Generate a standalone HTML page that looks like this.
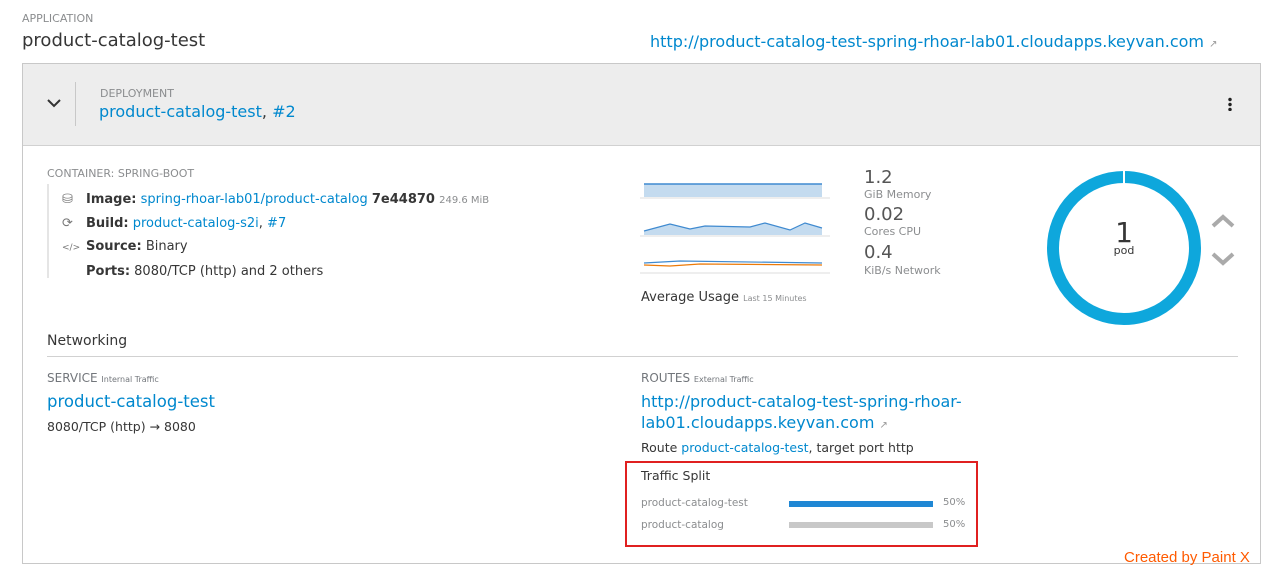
<!DOCTYPE html>
<html><head><style>
*{margin:0;padding:0;box-sizing:border-box}
body{width:1279px;height:572px;background:#fff;font-family:"DejaVu Sans","Liberation Sans",sans-serif;color:#363636;position:relative;overflow:hidden;font-size:13px}
.a{position:absolute;white-space:nowrap}
.lnk{color:#0088ce}
.sm{font-size:10px;color:#8b8d8f}
</style></head><body>
<div class="a sm" style="left:22px;top:12px;font-size:11px">APPLICATION</div>
<div class="a" style="left:22px;top:30px;font-size:18px;color:#363636">product-catalog-test</div>
<div class="a lnk" style="left:650px;top:32px;font-size:16px">http://product-catalog-test-spring-rhoar-lab01.cloudapps.keyvan.com <span style="font-size:10px;color:#999">↗</span></div>

<div class="a" style="left:22px;top:63px;width:1239px;height:501px;border:1px solid #c8c8c8"></div>
<div class="a" style="left:23px;top:64px;width:1237px;height:82px;background:#ededed;border-bottom:1px solid #d1d1d1"></div>
<svg class="a" style="left:46px;top:97px" width="16" height="12"><path d="M2 3 L8 9 L14 3" stroke="#333" stroke-width="2" fill="none"/></svg>
<div class="a" style="left:75px;top:82px;width:1px;height:44px;background:#c8c8c8"></div>
<div class="a sm" style="left:100px;top:87px;font-size:11px">DEPLOYMENT</div>
<div class="a" style="left:99px;top:102px;font-size:16px"><span class="lnk">product-catalog-test</span>, <span class="lnk">#2</span></div>
<div class="a" style="left:1228px;top:97px;width:4px;height:14px;background:radial-gradient(circle,#222 1.5px,transparent 2px) 0 0/4px 5px"></div>

<div class="a sm" style="left:47px;top:167px;font-size:11px">CONTAINER: SPRING-BOOT</div>
<div class="a" style="left:47px;top:184px;width:2px;height:94px;background:#e5e5e5"></div>
<div class="a" style="left:62px;top:188px;font-size:13px;line-height:23px">
<div><span style="color:#777;display:inline-block;width:24px">⛁</span><b>Image:</b> <span class="lnk">spring-rhoar-lab01/product-catalog</span> <b>7e44870</b> <span class="sm">249.6 MiB</span></div>
<div><span style="color:#777;display:inline-block;width:24px">⟳</span><b>Build:</b> <span class="lnk">product-catalog-s2i</span>, <span class="lnk">#7</span></div>
<div><span style="color:#777;display:inline-block;width:24px;font-size:9px">&lt;/&gt;</span><b>Source:</b> Binary</div>
<div><span style="display:inline-block;width:24px"></span><b>Ports:</b> 8080/TCP (http) and 2 others</div>
</div>

<svg class="a" style="left:640px;top:170px" width="200" height="110">
<rect x="4" y="14" width="178" height="13" fill="#c4dbef"/><line x1="4" y1="14" x2="182" y2="14" stroke="#3f8ad0" stroke-width="1.5"/>
<line x1="0" y1="28" x2="190" y2="28" stroke="#ddd"/>
<path d="M4 61 L30 54 L50 59 L65 56 L110 57 L125 53 L150 60 L165 53 L182 58 L182 65 L4 65Z" fill="#c4dbef"/>
<path d="M4 61 L30 54 L50 59 L65 56 L110 57 L125 53 L150 60 L165 53 L182 58" stroke="#3f8ad0" stroke-width="1.2" fill="none"/>
<line x1="0" y1="66" x2="190" y2="66" stroke="#ddd"/>
<path d="M4 93 L40 91 L182 93" stroke="#3f8ad0" stroke-width="1.2" fill="none"/>
<path d="M4 95 L30 96 L60 94 L182 95" stroke="#ec7a08" stroke-width="1.2" fill="none"/>
<line x1="0" y1="103" x2="190" y2="103" stroke="#ddd"/>
</svg>
<div class="a" style="left:864px;top:167px;font-size:18px;color:#555">1.2</div>
<div class="a sm" style="left:864px;top:188px;font-size:11px">GiB Memory</div>
<div class="a" style="left:864px;top:204px;font-size:18px;color:#555">0.02</div>
<div class="a sm" style="left:864px;top:225px;font-size:11px">Cores CPU</div>
<div class="a" style="left:864px;top:242px;font-size:18px;color:#555">0.4</div>
<div class="a sm" style="left:864px;top:264px;font-size:11px">KiB/s Network</div>
<div class="a" style="left:641px;top:290px;font-size:13px">Average Usage <span style="font-size:8px;color:#8b8d8f">Last 15 Minutes</span></div>

<svg class="a" style="left:1046px;top:170px" width="160" height="160">
<circle cx="78" cy="78" r="71" stroke="#0ea7dc" stroke-width="12" fill="none"/>
<line x1="78" y1="0" x2="78" y2="14" stroke="#fff" stroke-width="2"/>
<text x="78" y="72" text-anchor="middle" font-size="28" font-family="DejaVu Sans" fill="#363636">1</text>
<text x="78" y="84" text-anchor="middle" font-size="11" font-family="DejaVu Sans" fill="#363636">pod</text>
</svg>
<svg class="a" style="left:1210px;top:212px" width="28" height="60"><path d="M3 14 L13 5 L23 14" stroke="#aaa" stroke-width="4" fill="none"/><path d="M3 42 L13 51 L23 42" stroke="#aaa" stroke-width="4" fill="none"/></svg>

<div class="a" style="left:47px;top:333px;font-size:14px">Networking</div>
<div class="a" style="left:47px;top:356px;width:1191px;height:1px;background:#d1d1d1"></div>
<div class="a" style="left:47px;top:371px;font-size:12px;color:#72767b">SERVICE <span style="font-size:8px">Internal Traffic</span></div>
<div class="a lnk" style="left:47px;top:392px;font-size:16.5px">product-catalog-test</div>
<div class="a" style="left:47px;top:419px;font-size:12.5px">8080/TCP (http) → 8080</div>
<div class="a" style="left:641px;top:371px;font-size:12px;color:#72767b">ROUTES <span style="font-size:8px">External Traffic</span></div>
<div class="a lnk" style="left:641px;top:391px;font-size:16px;line-height:21px">http://product-catalog-test-spring-rhoar-<br>lab01.cloudapps.keyvan.com <span style="font-size:10px;color:#999">↗</span></div>
<div class="a" style="left:641px;top:440px;font-size:12.5px">Route <span class="lnk">product-catalog-test</span>, target port http</div>

<div class="a" style="left:625px;top:461px;width:353px;height:86px;border:2px solid #e02020"></div>
<div class="a" style="left:641px;top:468px;font-size:12.5px">Traffic Split</div>
<div class="a" style="left:641px;top:497px;font-size:10.5px;color:#8b8d8f">product-catalog-test</div>
<div class="a" style="left:789px;top:501px;width:144px;height:6px;background:#1f87d4"></div>
<div class="a" style="left:943px;top:497px;font-size:10px;color:#8b8d8f">50%</div>
<div class="a" style="left:641px;top:519px;font-size:10.5px;color:#8b8d8f">product-catalog</div>
<div class="a" style="left:789px;top:522px;width:144px;height:6px;background:#c8c8c8"></div>
<div class="a" style="left:943px;top:519px;font-size:10px;color:#8b8d8f">50%</div>

<div class="a" style="left:1124px;top:549px;color:#ff5a00;font-family:'Liberation Sans',sans-serif;font-size:15px">Created by Paint X</div>
</body></html>
